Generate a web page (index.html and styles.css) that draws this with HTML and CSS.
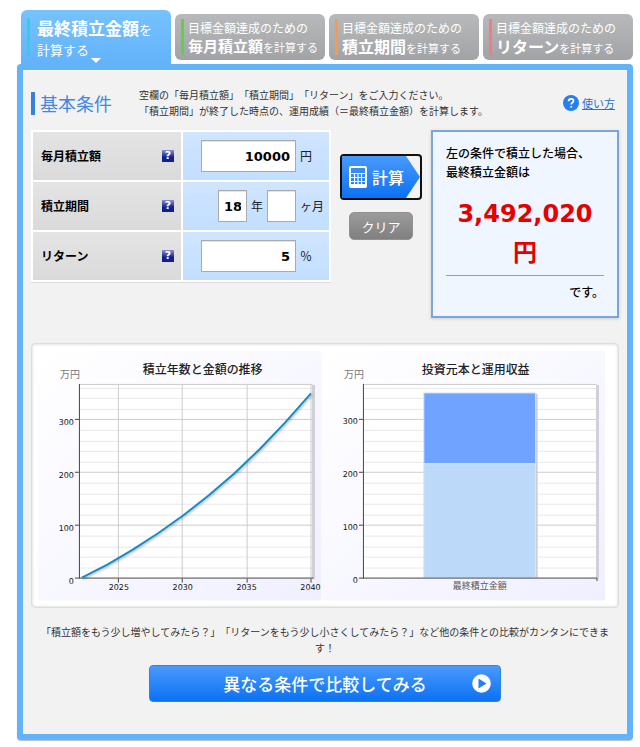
FILE: index.html
```html
<!DOCTYPE html>
<html lang="ja">
<head>
<meta charset="utf-8">
<meta name="viewport" content="width=device-width, initial-scale=1">
<title>積立シミュレーション</title>
<link rel="stylesheet" href="styles.css">
</head>
<body>
<div class="simulator">
  <nav class="tabs">
    <a class="tab tab--active" href="#final"><span class="tab-text"><span><strong>最終積立金額</strong>を</span><span>計算する</span></span></a>
    <a class="tab tab--monthly" href="#monthly"><span class="tab-text"><span>目標金額達成のための</span><small><strong>毎月積立額</strong>を計算する</small></span></a>
    <a class="tab tab--period" href="#period"><span class="tab-text"><span>目標金額達成のための</span><small><strong>積立期間</strong>を計算する</small></span></a>
    <a class="tab tab--return" href="#return"><span class="tab-text"><span>目標金額達成のための</span><small><strong>リターン</strong>を計算する</small></span></a>
  </nav>

  <main class="panel" id="final">
    <header class="intro">
      <h1>基本条件</h1>
      <p>空欄の「毎月積立額」「積立期間」「リターン」をご入力ください。<br>「積立期間」が終了した時点の、運用成績（＝最終積立金額）を計算します。</p>
      <a class="usage" href="#usage">
        <svg width="16" height="16" viewBox="0 0 16 16" aria-hidden="true">
          <circle cx="8" cy="8" r="8" fill="#2580ee"/>
          <path d="M5.6 6.3c0-1.5 1-2.4 2.5-2.4s2.4.8 2.4 2c0 1.6-2.3 1.7-2.3 3.5M8.2 11v1.6" fill="none" stroke="#fff" stroke-width="1.7"/>
        </svg><span>使い方</span></a>
    </header>

    <form class="conditions">
      <table class="fields">
        <tr>
          <th scope="row"><div class="name"><label for="amount">毎月積立額</label><a class="hint" href="#hint-amount">?</a></div></th>
          <td><div class="entry"><input class="wide" id="amount" type="text" value="10000"><span class="unit">円</span></div></td>
        </tr>
        <tr>
          <th scope="row"><div class="name"><label for="years">積立期間</label><a class="hint" href="#hint-period">?</a></div></th>
          <td><div class="entry"><input id="years" type="text" value="18"><span>年</span><input id="months" type="text" aria-labelledby="months-unit"><label class="unit" id="months-unit" for="months">ヶ月</label></div></td>
        </tr>
        <tr>
          <th scope="row"><div class="name"><label for="rate">リターン</label><a class="hint" href="#hint-rate">?</a></div></th>
          <td><div class="entry"><input class="wide" id="rate" type="text" value="5"><span class="unit">％</span></div></td>
        </tr>
      </table>

      <div class="actions">
        <button class="calculate" type="button"><span class="arrow">
          <svg width="18" height="22" viewBox="0 0 18 22" aria-hidden="true">
            <rect x="1" y="1" width="16" height="20" rx="1" fill="none" stroke="#fff" stroke-width="2"/>
            <path d="M2 7.5h14M2 11.500h14M2 15.500h14M5.500 8v11M9 8v11M12.500 8v11" stroke="#fff" stroke-width="1.200"/>
            <path d="M2 19h14" stroke="#fff" stroke-width="2"/>
          </svg>計算</span></button>
        <button class="clear" type="reset">クリア</button>
      </div>

      <section class="result">
        <p>左の条件で積立した場合、<br>最終積立金額は</p>
        <output class="total" for="amount years months rate">3,492,020<br>円</output>
        <p class="closing">です。</p>
      </section>
    </form>

    <section class="charts">
      <svg class="chart" viewBox="0 0 284 250" role="img" aria-label="積立年数と金額の推移">
        <defs>
          <linearGradient id="wash" x1="0" y1="0" x2="1" y2="1"><stop offset="0" stop-color="#fff"/><stop offset=".3" stop-color="#fbfbff"/><stop offset="1" stop-color="#f0efff"/></linearGradient>
          <filter id="soft" x="-5%" y="-5%" width="110%" height="115%"><feDropShadow dx="1" dy="1" stdDeviation="1" flood-opacity=".3"/></filter>
        </defs>
        <rect width="284" height="250" rx="3" fill="url(#wash)"/>
        <text class="title" x="165" y="23">積立年数と金額の推移</text>
        <text class="scale" x="22" y="27">万円</text>
        <rect x="41" y="34" width="235" height="194" fill="#fff"/>
        <path class="minor" d="M42 37.5h233M42 47.5h233M42 58.5h233M42 79.5h233M42 90.5h233M42 100.5h233M42 111.5h233M42 132.5h233M42 143.5h233M42 153.5h233M42 164.5h233M42 185.5h233M42 196.5h233M42 206.5h233M42 217.5h233"/>
        <path class="major" d="M42 33.5h233M42 68.5h233M42 121.5h233M42 174.5h233M80.5 34v193M144.5 34v193M209.5 34v193M273.5 34v193"/>
        <path class="edge" d="M276 34v194"/>
        <path class="axis" d="M41.5 33v195M37 227.5h239M37 68.5h4M37 121.5h4M37 174.5h4M80.5 228v4M144.5 228v4M209.5 228v4M273.5 228v4"/>
        <path class="trend" filter="url(#soft)" d="M44 227 69.5 214 95 199 120.3 182.6 145.7 164.6 171.2 144.6 196.6 122.7 222 98.4 247.5 71.7 273.5 42.5"/>
        <g class="ticks end"><text x="36" y="74">300</text><text x="36" y="127">200</text><text x="36" y="180">100</text><text x="36" y="233">0</text></g>
        <g class="ticks mid"><text x="81" y="239">2025</text><text x="145" y="239">2030</text><text x="209" y="239">2035</text><text x="273" y="239">2040</text></g>
      </svg>
      <svg class="chart" viewBox="0 0 284 250" role="img" aria-label="投資元本と運用収益">
        <rect width="284" height="250" rx="3" fill="url(#wash)"/>
        <text class="title" x="154" y="23">投資元本と運用収益</text>
        <text class="scale" x="22" y="27">万円</text>
        <rect x="41" y="34" width="235" height="194" fill="#fff"/>
        <path class="minor" d="M42 37.5h233M42 47.5h233M42 58.5h233M42 79.5h233M42 90.5h233M42 100.5h233M42 111.5h233M42 132.5h233M42 143.5h233M42 153.5h233M42 164.5h233M42 185.5h233M42 196.5h233M42 206.5h233M42 217.5h233"/>
        <path class="major" d="M42 33.5h233M42 68.5h233M42 121.5h233M42 174.5h233"/>
        <path class="edge" d="M276 34v194"/>
        <path d="M215 43v184" stroke="#ccc" stroke-width="2"/>
        <path d="M102 42h112v71H102z" fill="#70a2ff" stroke="#d5e3fb"/>
        <path d="M102 113h112v114H102z" fill="#bcd9f9" stroke="#d5e6fb"/>
        <path class="axis" d="M41.5 33v195M37 227.5h238.500v3M37 68.5h4M37 121.5h4M37 174.5h4"/>
        <g class="ticks end"><text x="36" y="73">300</text><text x="36" y="126">200</text><text x="36" y="179">100</text><text x="36" y="232">0</text></g>
        <text class="category" x="158" y="238">最終積立金額</text>
      </svg>
    </section>

    <p class="suggestion">「積立額をもう少し増やしてみたら？」「リターンをもう少し小さくしてみたら？」など他の条件との比較がカンタンにできます！</p>
    <button class="compare" type="button"><span>異なる条件で比較してみる</span>
      <svg width="19" height="19" viewBox="0 0 19 19" aria-hidden="true"><circle cx="9.500" cy="9.500" r="9.300" fill="#fff"/><path d="M6.500 4.500v10l8-5z" fill="#2480f6"/></svg>
    </button>
  </main>
</div>
</body>
</html>
```

FILE: styles.css
```css
* { box-sizing: border-box; }

body {
  margin: 0;
  background: #fff;
  color: #333;
  font-family: "Noto Sans CJK JP", sans-serif;
  font-size: 10px;
  line-height: 16px;
  text-spacing-trim: space-all;
}

h1, p { margin: 0; }
button, input { font-family: inherit; }

.simulator { padding: 10px 7px 7px 17px; }

/* Tabs */
.tabs {
  display: grid;
  grid-template-columns: repeat(4, 1fr);
  gap: 4px;
  padding-left: 4px;
}

.tab {
  --mark: #35cbe9;
  margin: 4px 0;
  padding: 5px 0 5px 6px;
  border-radius: 6px;
  background: linear-gradient(#b8b9bb, #a2a3a6);
  color: #fff;
  font-size: 12px;
  text-decoration: none;
  white-space: nowrap;
}

.tab-text {
  display: flex;
  flex-direction: column;
  height: 36px;
  padding-left: 4px;
  border-left: 3px solid var(--mark);
  line-height: 18px;
}

.tab small { font-size: 11px; }
.tab strong { font-size: 16px; }
.tab--monthly { --mark: #5fd142; }
.tab--monthly strong { font-size: 15px; }
.tab--period { --mark: #f89a49; }
.tab--return { --mark: #f57b80; }

.tab--active {
  position: relative;
  margin: 0;
  padding-top: 8px;
  border-radius: 6px 6px 0 0;
  background: linear-gradient(#76c2fe, #63b3fb);
  font-size: 13px;
}

.tab--active .tab-text {
  height: 38px;
  padding-left: 7px;
  line-height: 20px;
}

.tab--active strong { font-size: 17px; }

.tab--active::after {
  content: "";
  position: absolute;
  bottom: 1px;
  left: 50%;
  margin-left: -5px;
  border: 5px solid transparent;
  border-top-color: #fff;
  border-bottom: 0;
}

/* Panel */
.panel {
  padding: 17px 8px 32px;
  border: 6px solid #63b3fb;
  border-radius: 4px;
  background: #f2f2f2;
  box-shadow: 0 1px 1px #bbb, inset 0 1px #fff;
}

.intro {
  display: flex;
  align-items: center;
  margin-bottom: 11px;
}

.intro h1 {
  width: 108px;
  padding-left: 5px;
  border-left: 4px solid #3580e0;
  color: #4288dd;
  font-size: 18px;
  font-weight: 400;
  line-height: 23px;
}

.intro p { flex: 1; }

.usage {
  display: flex;
  align-items: center;
  gap: 3px;
  padding-right: 4px;
  color: #2d73c5;
  font-size: 11px;
}

/* Conditions form */
.conditions {
  display: flex;
  align-items: flex-start;
  gap: 9px;
  color: #000;
  font-size: 12px;
}

.fields {
  width: 300px;
  border-spacing: 2px;
  background: #fff;
  box-shadow: 0 1px #ddd;
}

.fields th,
.fields td {
  height: 48px;
  padding: 0;
}

.fields th { background: linear-gradient(#e4e4e4, #dadada); }

.fields td {
  width: 146px;
  background: linear-gradient(#d0e5ff, #c2deff);
}

.name {
  display: flex;
  align-items: center;
  justify-content: space-between;
  padding: 0 7px 0 8px;
}

.hint {
  width: 12px;
  height: 12px;
  background: linear-gradient(#8b94ce, #10218d 60%);
  color: #fff;
  font: bold 11px/12px "DejaVu Sans", sans-serif;
  text-align: center;
  text-decoration: none;
}

.entry {
  display: flex;
  align-items: center;
  justify-content: flex-end;
  gap: 4px;
  padding-right: 5px;
  color: #222;
}

.unit { width: 24px; }

.entry input {
  width: 29px;
  height: 32px;
  padding: 0 5px;
  border: 1px solid #aaa;
  border-radius: 0;
  background: #fff;
  box-shadow: inset 0 1px #e4e4e4;
  color: #000;
  font: bold 13px "DejaVu Sans", sans-serif;
  text-align: right;
}

.entry .wide { width: 95px; }

.actions {
  display: flex;
  flex-direction: column;
  align-items: center;
  gap: 12px;
  padding-top: 24px;
}

.calculate {
  width: 82px;
  height: 46px;
  padding: 0;
  border: 2px solid #101010;
  border-radius: 4px;
  background: #f2f2f2;
  color: #fff;
  font-size: 16px;
  font-weight: 500;
}

.arrow {
  display: flex;
  align-items: center;
  gap: 5px;
  height: 42px;
  padding-left: 7px;
  background: linear-gradient(#4a9afb, #0b71f4);
  clip-path: polygon(0 0, 64px 0, 100% 50%, 64px 100%, 0 100%);
}

.clear {
  width: 64px;
  height: 28px;
  padding: 0;
  border: 1px solid #929292;
  border-radius: 5px;
  background: linear-gradient(#9b9b9b, #808080);
  color: #fff;
  font-size: 13px;
}

.result {
  flex: 1;
  min-height: 188px;
  padding: 11px 13px;
  border: 2px solid #7ca5d8;
  background: #f0f6ff;
  box-shadow: 0 1px 3px #ccc;
  font-weight: 500;
  line-height: 19px;
}

.total {
  display: block;
  margin-top: 14px;
  padding-bottom: 2px;
  border-bottom: 1px solid #7ca5d8;
  color: #e60000;
  font: bold 24px/39px "DejaVu Sans", "Noto Sans CJK JP", sans-serif;
  text-align: center;
}

.closing {
  margin-top: 6px;
  text-align: right;
}

/* Charts */
.charts {
  display: grid;
  grid-template-columns: 1fr 1fr;
  margin-top: 25px;
  padding: 7px 13px 6px 6px;
  border: 1px solid #ddd;
  border-radius: 4px;
  background: #fff;
  box-shadow: inset 0 0 3px #ccc;
}

.chart {
  display: block;
  width: 100%;
}

.title {
  fill: #222;
  font-size: 12px;
  font-weight: 500;
  text-anchor: middle;
}

.scale { fill: #777; }
.minor { stroke: #e8e8e8; }
.major { stroke: #ccc; }
.edge { stroke: #d0d0d6; stroke-width: 3; }
.axis { fill: none; stroke: #444; }
.trend { fill: none; stroke: #168cc4; stroke-width: 2; stroke-linejoin: round; }
.ticks { fill: #111; font: 8px "DejaVu Sans", sans-serif; }
.end { text-anchor: end; }
.mid { text-anchor: middle; }
.category { fill: #555; font-size: 9px; text-anchor: middle; }

.suggestion {
  padding: 0 8px;
  margin: 16px 0 9px;
  text-align: center;
}

.compare {
  display: grid;
  grid-template-columns: 1fr auto 1fr;
  align-items: center;
  width: 352px;
  height: 37px;
  margin: 0 auto;
  padding: 0 9px;
  border: 1px solid #2c82ef;
  border-radius: 4px;
  background: linear-gradient(#4a9afb, #0b71f4);
  color: #fff;
  font-size: 17px;
  font-weight: 500;
}

.compare span { grid-column: 2; }
.compare svg { justify-self: end; }
```
